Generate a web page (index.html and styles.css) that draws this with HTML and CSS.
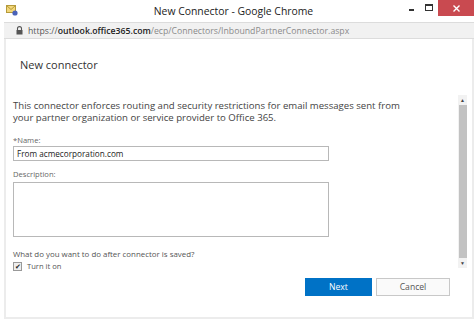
FILE: index.html
```html
<!DOCTYPE html>
<html lang="en">
<head>
  <meta charset="UTF-8" />
  <title>New Connector - Google Chrome</title>
  <link rel="stylesheet" href="styles.css">
</head>
<body>
  <div class="window">
    <div class="titlebar">
      <svg class="app-icon" width="12" height="11" viewBox="0 0 12 11">
        <rect x="0.5" y="0.5" width="9" height="7" fill="#f3d77a" stroke="#b59a3a"/>
        <path d="M0.5 0.5 L5 4.5 L9.5 0.5" fill="none" stroke="#b59a3a"/>
        <circle cx="9" cy="8" r="2.6" fill="#4a62b8"/>
      </svg>
      <div class="title">New Connector - Google Chrome</div>
      <div class="btn-min"></div>
      <div class="btn-max"></div>
      <div class="btn-close">
        <svg width="7" height="7" viewBox="0 0 7 7">
          <path d="M0.5 0.5 L6.5 6.5 M6.5 0.5 L0.5 6.5" stroke="#fff" stroke-width="1.4"/>
        </svg>
      </div>
    </div>
    <div class="addressbar">
      <svg class="lock" width="7" height="9" viewBox="0 0 7 9">
        <path d="M1.5 4 V2.6 a2 2 0 0 1 4 0 V4" fill="none" stroke="#555" stroke-width="1.1"/>
        <rect x="0.5" y="4" width="6" height="4.5" fill="#555"/>
      </svg>
      <span class="url">https://<b>outlook.office365.com</b><span class="path">/ecp/Connectors/InboundPartnerConnector.aspx</span></span>
    </div>
    <div class="frame">
      <div class="dialog">
        <h1>New connector</h1>
        <p class="intro">This connector enforces routing and security restrictions for email messages sent from your partner organization or service provider to Office 365.</p>
        <label class="field-label">*Name:</label>
        <div class="textbox">From acmecorporation.com</div>
        <label class="field-label desc">Description:</label>
        <div class="textarea"></div>
        <div class="question">What do you want to do after connector is saved?</div>
        <div class="check-row">
          <span class="checkbox">&#x2714;</span>
          <span>Turn it on</span>
        </div>
        <div class="actions">
          <button class="btn primary">Next</button>
          <button class="btn">Cancel</button>
        </div>
      </div>
      <div class="scrollbar">
        <span class="arrow">&#x25B2;</span>
        <div class="thumb"></div>
        <span class="arrow">&#x25BC;</span>
      </div>
    </div>
  </div>
</body>
</html>
```

FILE: styles.css
```css
body {
  margin: 0;
  background: #ffffff;
  font-family: "Open Sans", "Noto Sans", sans-serif;
  color: #444;
}
.window {
  width: 474px;
  height: 322px;
  display: flex;
  flex-direction: column;
  overflow: hidden;
}
.titlebar {
  height: 22px;
  display: grid;
  grid-template-columns: 24px 1fr 16px 13px 36px;
  align-items: start;
}
.app-icon {
  margin: 5px 0 0 6px;
}
.title {
  text-align: center;
  font-size: 10.4px;
  line-height: 22px;
  color: #222;
  padding-left: 34px;
}
.btn-min {
  width: 5px;
  height: 2px;
  margin-top: 9px;
  background: #333;
}
.btn-max {
  width: 6px;
  height: 4px;
  margin-top: 4px;
  border: 1px solid #333;
  border-top-width: 2px;
}
.btn-close {
  width: 36px;
  height: 16px;
  background: #c94a50;
  display: flex;
  align-items: center;
  justify-content: center;
}
.addressbar {
  height: 15px;
  margin-left: 4px;
  background: #f1f1f1;
  border-top: 1px solid #dcdcdc;
  border-bottom: 1px solid #dcdcdc;
  display: flex;
  align-items: center;
  gap: 5px;
  padding-left: 12px;
  font-size: 8.7px;
  color: #555;
}
.url b {
  color: #222;
  font-weight: 600;
}
.url .path {
  color: #8a8a8a;
}
.frame {
  margin-left: 4px;
  width: 466px;
  height: 278px;
  border-left: 2px solid #ececec;
  border-right: 2px solid #ececec;
  border-bottom: 2px solid #ececec;
  display: flex;
}
.dialog {
  flex: 1;
  padding: 16px 0 0 7px;
  font-size: 7.6px;
  color: #555;
}
h1 {
  margin: 0 0 25px 7px;
  font-size: 11px;
  font-weight: 400;
  line-height: 20px;
  color: #333;
}
.intro {
  margin: 0 0 11px;
  width: 396px;
  font-size: 9.6px;
  line-height: 12px;
  color: #444;
}
.field-label {
  display: block;
  line-height: 11px;
  color: #666;
}
.field-label.desc {
  margin-top: 8px;
  margin-bottom: 2px;
}
.textbox {
  width: 311px;
  height: 13px;
  border: 1px solid #b8b8b8;
  padding-left: 3px;
  line-height: 13px;
  font-size: 8.2px;
  color: #222;
}
.textarea {
  width: 314px;
  height: 53px;
  border: 1px solid #b8b8b8;
}
.question {
  margin-top: 11px;
  line-height: 12px;
  font-size: 7.9px;
}
.check-row {
  display: flex;
  align-items: center;
  gap: 5px;
  height: 12px;
}
.checkbox {
  width: 7px;
  height: 7px;
  border: 1px solid #999;
  background: #eee;
  font-size: 7px;
  line-height: 7px;
  text-align: center;
  color: #222;
}
.actions {
  display: flex;
  justify-content: flex-end;
  gap: 4px;
  margin-top: 6px;
  margin-right: 8px;
}
.btn {
  width: 74px;
  height: 18px;
  border: 1px solid #c8c8c8;
  background: #fafafa;
  font-family: inherit;
  font-size: 8.6px;
  color: #555;
  padding: 0;
}
.btn.primary {
  width: 67px;
  background: #0072c6;
  border-color: #0072c6;
  color: #fff;
}
.scrollbar {
  width: 9px;
  margin: 56px 5px 0 0;
  height: 173px;
  background: #f2f2f2;
  display: flex;
  flex-direction: column;
  align-items: center;
}
.arrow {
  font-size: 5px;
  line-height: 10px;
  color: #444;
}
.thumb {
  flex: 1;
  width: 8px;
  background: #c2c2c2;
}
```
